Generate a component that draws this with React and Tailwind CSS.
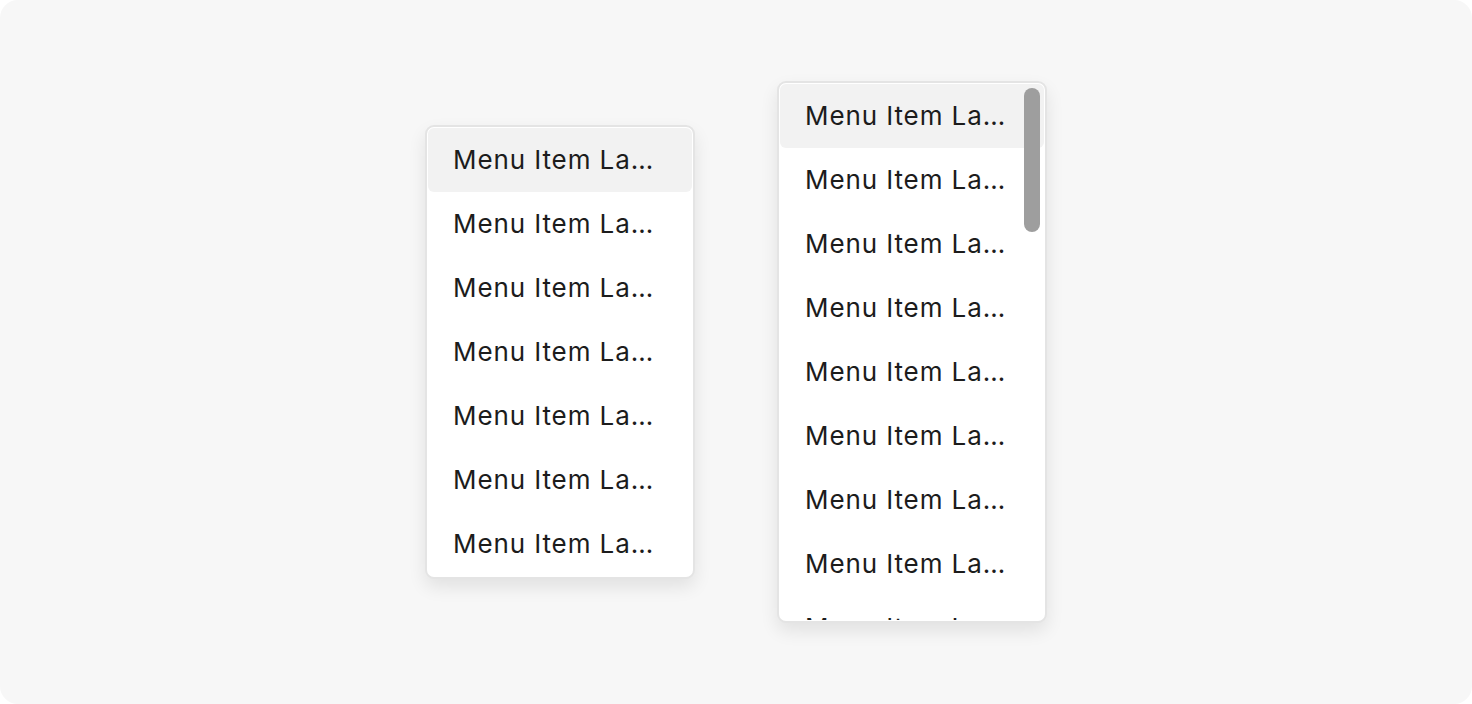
import React from 'react';

const items = Array.from({ length: 12 }, (_, i) => ({ id: i, label: 'Menu Item Label' }));

const MenuItem = ({ label, active }) => (
  <div
    className={`flex h-16 shrink-0 items-center rounded-md pl-[25px] pr-[32px] ${
      active ? 'bg-[#f2f2f2]' : ''
    }`}
  >
    <span className="truncate text-[26px] leading-none tracking-[0.9px] text-[#1c1c1c]">{label}</span>
  </div>
);

const Menu = ({ count, scroll }) => (
  <div className="relative w-[270px] overflow-hidden rounded-[9px] border-2 border-[#e4e4e4] bg-white p-px shadow-[0_8px_18px_rgba(0,0,0,0.09)]">
    <div className={`flex flex-col ${scroll ? 'h-[536px] overflow-hidden rounded-b-md' : ''}`}>
      {items.slice(0, count).map((item, i) => (
        <MenuItem key={item.id} label={item.label} active={i === 0} />
      ))}
    </div>
    {scroll && (
      <div className="absolute right-[5px] top-[5px] h-[144px] w-4 rounded-full bg-[#9e9e9e]" />
    )}
  </div>
);

export default function App() {
  return (
    <div className="bg-white font-['Inter',sans-serif]">
      <div className="flex h-[704px] w-full items-center justify-center gap-[82px] rounded-[18px] bg-[#f7f7f7]">
        <Menu count={7} />
        <Menu count={12} scroll />
      </div>
    </div>
  );
}
